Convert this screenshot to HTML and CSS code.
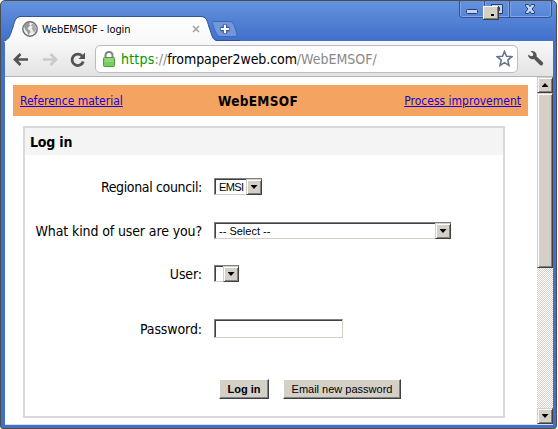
FILE: index.html
```
<!DOCTYPE html>
<html lang="en">
<head>
<meta charset="utf-8">
<title>WebEMSOF - login</title>
<link rel="stylesheet" href="styles.css">
</head>
<body>
<div class="window">
  <header class="titlebar">
    <svg class="tab-shape" width="240" height="42" viewBox="0 0 240 42">
      <defs><linearGradient id="tabfill" x1="0" y1="0" x2="0" y2="1"><stop offset="0" stop-color="#fff"/><stop offset="1" stop-color="#f8f8f9"/></linearGradient></defs>
      <path d="M4 42V41C10 39 10 35 13 27C15 20 16 17 21 17H201C206 17 207 20 209 27C212 35 212 40 217 41V42Z" fill="url(#tabfill)"/>
      <path d="M4 41C10 39 10 35 13 27C15 20 16 16.500 21 16.500H201C206 16.500 207 20 209 27C212 35 212 40 217 40.500H240" fill="none" stroke="#2d549d"/>
      <path d="M214 21.500H229C234 21.500 234 25 236 31C237 35 237 36.500 234 36.500H221C217 36.500 216 33 214 28C212 23 212 21.500 214 21.500Z" fill="#7497dc" stroke="#3f68b8"/>
      <path d="M225 24.500V33.500M220.500 29H229.500" stroke="#34589d" stroke-width="4.500"/>
      <path d="M225 25V33M221 29H229" stroke="#fff" stroke-width="2.200"/>
    </svg>
    <div class="tab">
      <svg class="globe" width="16" height="16" viewBox="0 0 16 16">
        <circle cx="8" cy="8" r="7.200" fill="#efefef" stroke="#6d6d6d" stroke-width="1.400"/>
        <path d="M2.500 3.500L5 1.800L8 2.200L7 3.500L8.500 4.500L6.500 6L5.500 8L8 9.500L8.500 11L7 13.500L6 14L5.500 11L3.500 9L2 6Z" fill="#999"/>
        <path d="M10 3L12 3L13.800 6L14 9L12 12L11 9.500L9.500 8L10.500 5.500L9 4.500Z" fill="#aaa"/>
      </svg>
      <span class="tab-title">WebEMSOF - login</span>
      <svg class="tab-close" width="8" height="8" viewBox="0 0 8 8"><path d="M1 1L7 7M7 1L1 7" stroke="#a2a2a2" stroke-width="1.500"/></svg>
    </div>
    <svg class="caption" width="94" height="20" viewBox="0 0 94 20">
      <path d="M.5 0V14Q.5 16.500 4 16.500H89Q92.500 16.500 92.500 14V0M25.500 0V16M50.500 0V16" fill="none" stroke="#2d529a"/>
      <path d="M1.500 1V14Q2 15.500 4 15.500H24.500V1M26.500 1V15.500H49.500V1M51.500 1V15.500H89Q91.500 15 91.500 13V1" fill="none" stroke="#82a5e4"/>
      <rect x="7.500" y="8.500" width="11" height="4" rx="1" fill="#c3d4f2" stroke="#263d70"/>
      <path d="M32.500 3.500H43.500V12.500H32.500Z" fill="#c3d4f2" stroke="#263d70"/>
      <path d="M38.500 6.500H40.500V9.500H38.500Z" fill="#5b85d3" stroke="#263d70"/>
      <path d="M66.500 3.500H69.500L71 5.500L72.500 3.500H75.500V5L73 8L75.500 11V12.500H72.500L71 10.500L69.500 12.500H66.500V11L69 8L66.500 5Z" fill="#c9d9f5" stroke="#293f72"/>
      <path d="M24 5H40V19H24Z" fill="#404040"/>
      <path d="M24 5H39V18H24Z" fill="#fff"/>
      <path d="M25 6H39V18H25Z" fill="#808080"/>
      <path d="M25 6H38V17H25Z" fill="#d4d0c8"/>
      <path d="M32 13H35V15H32Z"/>
    </svg>
  </header>
  <nav class="toolbar">
    <svg class="nav-icons" width="90" height="34" viewBox="0 0 90 34">
      <path d="M28 17.500H16M20.500 12L15 17.500L20.500 23" fill="none" stroke="#535353" stroke-width="2.700"/>
      <path d="M43 17.500H55M50.500 12L56 17.500L50.500 23" fill="none" stroke="#cacaca" stroke-width="2.700"/>
      <path d="M82 14A5.700 5.700 0 1 0 83.200 19.500" fill="none" stroke="#535353" stroke-width="2.800"/>
      <path d="M85 10.500V17H78.500Z" fill="#535353"/>
    </svg>
    <div class="address">
      <svg class="lock" width="12" height="16" viewBox="0 0 12 16">
        <path d="M2.500 8V4.500Q2.500 1 6 1T9.500 4.500V8" fill="none" stroke="#858585" stroke-width="2"/>
        <rect x=".5" y="6.500" width="11" height="9" rx="1" fill="#78cc60" stroke="#4d9c3e"/>
        <path d="M1.500 8H10.500M1.500 10H10.500" stroke="#a6e38e"/>
      </svg>
      <span class="url"><span class="scheme">https</span><span class="dim">://</span><span class="host">frompaper2web.com</span><span class="dim">/WebEMSOF/</span></span>
      <svg class="star" width="17" height="17" viewBox="0 0 17 17"><path d="M8.500 1.500L10.500 6.300L15.700 6.700L11.800 10.100L13 15.400L8.500 12.600L4 15.400L5.200 10.100L1.300 6.700L6.500 6.300Z" fill="#fff" stroke="#68738e" stroke-width="1.600"/></svg>
    </div>
    <svg class="wrench" width="17" height="17" viewBox="0 0 17 17"><path d="M3.500 1.200Q7 .2 9 3Q10 4.500 9.600 6.500L15.800 12.200Q16.800 13.800 15.500 15Q14.300 16 13 15L7 9Q4.500 9.800 2.500 8Q.8 6.500 1.200 4.500L3.800 6.200L6 5.800L6.200 3.500Z" fill="#555"/></svg>
  </nav>
  <div class="viewport">
    <main class="page">
      <div class="banner">
        <a class="ref" href="#">Reference material</a>
        <h1>WebEMSOF</h1>
        <a class="improve" href="#">Process improvement</a>
      </div>
      <form class="panel">
        <h2><span>Log in</span></h2>
        <div class="row council"><label class="l-council">Regional council:</label><div class="select s-council"><span>EMSI</span><i></i></div></div>
        <div class="row kind"><label class="l-kind">What kind of user are you?</label><div class="select s-kind"><span>-- Select --</span><i></i></div></div>
        <div class="row user"><label class="l-user">User:</label><div class="select s-user"><span></span><i></i></div></div>
        <div class="row pass"><label class="l-pass">Password:</label><input type="password"></div>
        <div class="actions"><button type="button" class="login">Log in</button><button type="button" class="email">Email new password</button></div>
      </form>
    </main>
    <aside class="scrollbar"><i class="up"></i><i class="thumb"></i><i class="down"></i></aside>
  </div>
</div>
</body>
</html>
```
FILE: styles.css
```
* { box-sizing: border-box; }
body {
  margin: 0;
  width: 558px;
  height: 429px;
  overflow: hidden;
  background: #fff;
  color: #000;
  font-family: "DejaVu Sans Condensed", "DejaVu Sans", sans-serif;
  font-stretch: condensed;
}
.window {
  position: relative;
  display: flex;
  flex-direction: column;
  width: 557px;
  height: 429px;
  padding: 0 3px 3px 4px;
  border: 1px solid #4c4c4c;
  border-radius: 5px 5px 3px 3px;
  background: linear-gradient(#6492dd 0, #4070cb 40px, #4070c8 100%);
}
.titlebar { flex: none; display: flex; height: 40px; justify-content: space-between; }
.tab-shape { position: absolute; left: -1px; top: -1px; }
.tab { position: relative; display: flex; align-items: center; width: 201px; height: 24px; margin-top: 16px; padding-left: 17px; }
.tab-title { margin-left: 4px; font-size: 11px; letter-spacing: -0.1px; white-space: nowrap; }
.tab-close { margin-left: auto; margin-right: 6px; }
.caption { position: relative; }
.toolbar {
  flex: none;
  display: flex;
  align-items: center;
  height: 36px;
  border-bottom: 1px solid #b4b4bf;
  background: linear-gradient(#f8f8f9, #e3e3e4);
}
.nav-icons { flex: none; margin-left: -5px; margin-right: 4px; }
.address {
  display: flex;
  align-items: center;
  width: 423px;
  height: 28px;
  margin-left: 1px;
  border: 1px solid #bcbcc0;
  border-radius: 5px;
  background: #fff;
}
.lock { margin-left: 7px; }
.url { margin-left: 6px; font-size: 14px; white-space: nowrap; }
.scheme { color: #090; letter-spacing: 0.2px; }
.host { letter-spacing: -0.07px; }
.dim { color: #888; }
.star { margin-left: auto; margin-right: 4px; }
.wrench { margin-left: 9px; }
.viewport { flex: 1; display: flex; min-height: 0; background: #fff; border-bottom: 1px solid #ddd; }
.page { flex: 1; padding: 8px 8px 0; }
.banner {
  display: grid;
  grid-template-columns: 198px 82px 1fr;
  align-items: center;
  width: 515px;
  height: 31px;
  padding: 0 7px;
  background: #f4a460;
}
.banner a { font-size: 12px; color: #1a00d5; white-space: nowrap; }
.improve { justify-self: end; }
.banner h1 { margin: 0; font-size: 13.500px; letter-spacing: 0.3px; }
.panel { width: 482px; height: 292px; margin: 10px 0 0 10px; border: 2px solid #d9d9d9; }
.panel h2 { height: 27px; margin: 0; padding-left: 5px; background: #f4f4f4; font-size: 14px; line-height: 29px; letter-spacing: -0.2px; }
.row { display: flex; height: 17px; line-height: 19px; font-size: 14px; }
.row label { width: 177px; margin-right: 12px; text-align: right; white-space: nowrap; }
.l-council { letter-spacing: -0.35px; }
.l-kind { letter-spacing: -0.12px; }
.l-user, .l-pass { letter-spacing: -0.1px; }
.council { margin-top: 23px; }
.kind { margin-top: 27px; }
.user { margin-top: 26px; }
.pass { margin-top: 37px; height: 19px; line-height: 21px; }
.select {
  display: flex;
  height: 17px;
  border: 1px solid;
  border-color: #808080 #404040 #d4d0c8 #808080;
  box-shadow: inset 1px 1px #404040;
  background: #fff;
  font: 11px/17px "Liberation Sans", sans-serif;
}
.select span { flex: 1; padding-left: 4px; white-space: nowrap; overflow: hidden; }
.select i, .up, .down {
  display: flex;
  flex: none;
  justify-content: center;
  align-items: center;
  width: 16px;
  background: #d4d0c8;
  border: 1px solid;
  border-color: #d4d0c8 #404040 #404040 #d4d0c8;
  box-shadow: inset 1px 1px #fff, inset -1px -1px #808080;
}
.select i { margin: 0 -1px -1px 0; }
.select i::after, .down::after { content: ""; width: 7px; height: 4px; background: #000; clip-path: polygon(0 0, 100% 0, 50% 100%); }
.up::after { content: ""; width: 7px; height: 4px; background: #000; clip-path: polygon(50% 0, 100% 100%, 0 100%); }
.s-council { width: 48px; letter-spacing: -0.6px; }
.s-kind { width: 237px; }
.s-user { width: 25px; }
input {
  width: 129px;
  height: 19px;
  padding: 1px 3px;
  border: 1px solid;
  border-color: #808080 #d4d0c8 #d4d0c8 #808080;
  box-shadow: inset 1px 1px #404040;
  background: #fff;
  outline: 0;
}
.actions { display: flex; gap: 14px; margin: 41px 0 0 194px; }
button {
  height: 20px;
  padding: 0;
  border: 1px solid;
  border-color: #fff #404040 #404040 #fff;
  box-shadow: inset -1px -1px #808080;
  background: #d4d0c8;
  color: #000;
  font: 11px/17px "Liberation Sans", sans-serif;
  white-space: nowrap;
}
.login { width: 50px; font-weight: bold; }
.email { width: 118px; }
.scrollbar {
  display: flex;
  flex-direction: column;
  width: 16px;
  background: repeating-conic-gradient(#d4d0c8 0 25%, #fff 0 50%) 0 0 / 2px 2px;
}
.up, .down { height: 16px; }
.thumb {
  height: 175px;
  background: #d4d0c8;
  border: 1px solid;
  border-color: #d4d0c8 #404040 #404040 #d4d0c8;
  box-shadow: inset 1px 1px #fff, inset -1px -1px #808080;
}
.down { margin-top: auto; }
```
